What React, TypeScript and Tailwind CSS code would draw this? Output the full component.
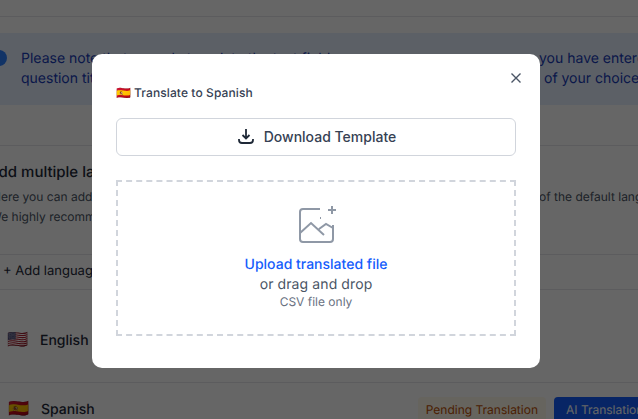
export default function App() {
  return (
    <div className="relative h-[419px] w-[638px] overflow-hidden bg-white font-['Inter',sans-serif] text-[#111827] [text-rendering:geometricPrecision]">
      {/* Page behind the dialog */}
      <div className="h-[17px] border-b border-gray-200" />
      <div className="mt-4 flex h-[72px] gap-[14px] bg-[#e6f0ff] pt-[16px] text-[14px] leading-[20px] text-blue-800">
        <div className="ml-[-9px] mt-[1px] h-4 w-4 shrink-0 rounded-full bg-blue-500" />
        <div className="flex min-w-0 flex-1 flex-col">
          <div className="flex whitespace-nowrap">
            <span className="w-[518px] shrink-0">Please note that we only translate the text fields</span>
            <span>you have entered</span>
          </div>
          <div className="flex whitespace-nowrap">
            <span className="w-[523px] shrink-0">question titles into the language</span>
            <span>of your choice.</span>
          </div>
        </div>
      </div>
      <div className="mt-10 border-t border-gray-200 pt-[16px]">
        <div className="ml-[-12px] whitespace-nowrap text-[15px] font-medium leading-5 text-gray-800">Add multiple languages</div>
        <div className="ml-[-8px] mt-[5px] flex whitespace-nowrap text-[12px] leading-5 text-gray-600">
          <span className="w-[547px] shrink-0">Here you can add translations</span>
          <span>of the default language</span>
        </div>
        <div className="ml-[-10px] whitespace-nowrap text-[12px] leading-5 text-gray-600">We highly recommend</div>
      </div>
      <div className="mt-[27px] flex h-[36px] items-center border-y border-gray-200 pl-[3px] text-[13px] text-gray-800">
        <span className="whitespace-nowrap">+ Add language</span>
      </div>
      <div className="flex h-[93px] items-center gap-[13px] border-b border-gray-200 pl-[7px] pt-[9px] text-[14px] font-medium text-gray-800">
        <span className="w-5 text-[17px] leading-none font-['Noto_Color_Emoji']">🇺🇸</span>
        <span>English</span>
      </div>
      <div className="flex h-[37px] items-center gap-[13px] pl-[8px] pt-[16px] text-[14px] font-medium text-gray-800">
        <span className="w-5 text-[17px] leading-none font-['Noto_Color_Emoji']">🇪🇸</span>
        <span>Spanish</span>
        <div className="ml-auto flex gap-[8px] whitespace-nowrap font-normal">
          <span className="rounded bg-amber-50 px-2 py-[4px] text-[12px] text-amber-700">Pending Translation</span>
          <span className="w-[84px] overflow-hidden rounded-l bg-blue-600 px-3 py-[4px] text-[12px] text-white">AI Translation</span>
        </div>
      </div>

      {/* Overlay and dialog */}
      <div className="absolute inset-0 flex items-start justify-center bg-black/60 pr-[6px] pt-[54px]">
        <div className="relative h-[314px] w-[448px] rounded-[10px] bg-white px-6 pt-[30px]">
          <button className="absolute right-[18px] top-[18px] text-gray-600">
            <svg width="12" height="12" viewBox="0 0 12 12" fill="none" stroke="currentColor" strokeWidth="1.4">
              <path d="M1.5 1.5 10.5 10.5M10.5 1.5 1.5 10.5" />
            </svg>
          </button>
          <div className="flex h-[18px] items-center gap-[3px] text-[12px] font-medium tracking-[0.1px] text-gray-700">
            <span className="font-['Noto_Color_Emoji'] text-[12px] leading-none">🇪🇸</span>
            <span>Translate to Spanish</span>
          </div>
          <button className="mt-4 flex h-[38px] w-full items-center justify-center gap-[10px] rounded-md border border-gray-300 pb-[2px] pl-[2px] text-[14px] font-medium text-gray-700">
            <svg width="16" height="16" viewBox="0 0 16 16" fill="none" stroke="#1f2937" strokeWidth="1.8">
              <path d="M8 1v9.5M4.5 7 8 10.5 11.5 7" />
              <path d="M1 11v1a3 3 0 0 0 3 3h8a3 3 0 0 0 3-3v-1" />
            </svg>
            Download Template
          </button>
          <div className="mt-6 flex h-[156px] flex-col items-center border-2 border-dashed border-gray-300 pt-[23px]">
            <svg width="40" height="40" viewBox="0 0 40 40" fill="none" stroke="#8f98a6" strokeWidth="2">
              <path d="M24 4H7a3 3 0 0 0-3 3v27a3 3 0 0 0 3 3h27a3 3 0 0 0 3-3V20" />
              <path d="M4 28l11-10 13 12M23 24l7-5 7 4" />
              <path d="M36 1v8M32 5h8" />
              <path d="M24 13h1" />
            </svg>
            <div className="mt-[10px] text-[14px] font-medium leading-5 text-blue-600">Upload translated file</div>
            <div className="text-[14px] leading-5 tracking-[0.1px] text-gray-600">or drag and drop</div>
            <div className="mt-[-1px] text-[12px] leading-[16px] text-gray-500">CSV file only</div>
          </div>
        </div>
      </div>
    </div>
  );
}
